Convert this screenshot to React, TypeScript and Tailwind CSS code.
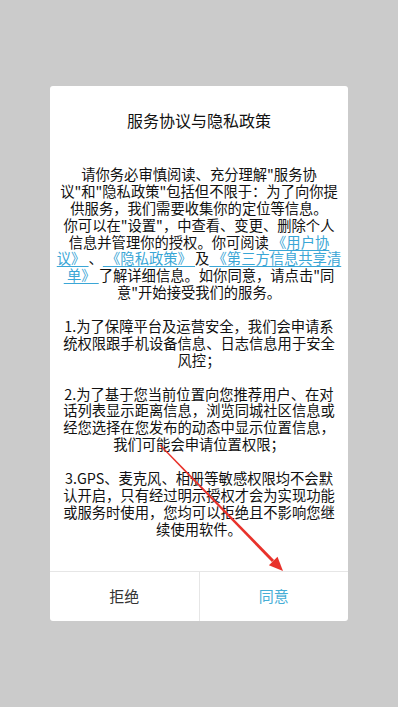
const font = { fontFamily: '"Noto Sans CJK SC", "Noto Sans", sans-serif' }

function L({ children }: { children: React.ReactNode }) {
  return <span className="text-[#3aa6d6] underline underline-offset-2 whitespace-pre">{children}</span>
}

const intro = [
  <>请你务必审慎阅读、充分理解"服务协</>,
  <>议"和"隐私政策"包括但不限于：为了向你提</>,
  <>供服务，我们需要收集你的定位等信息。</>,
  <>你可以在"设置"，中查看、变更、删除个人</>,
  <>信息并管理你的授权。你可阅读<L> 《用户协</L></>,
  <><L>议》 </L>、<L> 《隐私政策》 </L>及<L> 《第三方信息共享清</L></>,
  <><L> 单》 </L>了解详细信息。如你同意，请点击"同</>,
  <>意"开始接受我们的服务。</>,
]

const items = [
  ['1.为了保障平台及运营安全，我们会申请系', '统权限跟手机设备信息、日志信息用于安全', '风控；'],
  ['2.为了基于您当前位置向您推荐用户、在对', '话列表显示距离信息，浏览同城社区信息或', '经您选择在您发布的动态中显示位置信息，', '我们可能会申请位置权限；'],
  ['3.GPS、麦克风、相册等敏感权限均不会默', '认开启，只有经过明示授权才会为实现功能', '或服务时使用，您均可以拒绝且不影响您继', '续使用软件。'],
]

export default function App() {
  return (
    <div className="relative w-[398px] h-[707px] bg-[#cbcbcb] pt-[86px] px-[50px]" style={font}>
      <div className="bg-white rounded-[3px] overflow-hidden">
        <h1 className="text-center text-[16px] leading-[20px] text-[#111] pt-[24px]">服务协议与隐私政策</h1>
        <div className="pt-[35px] pb-[34px] text-center text-[14.3px] leading-[17px] text-[#111]">
          {intro.map((line, i) => (
            <div key={i} className="whitespace-nowrap h-[16.9px]">{line}</div>
          ))}
          {items.map((p, i) => (
            <div key={i} className="mt-[16.9px]">
              {p.map((line, j) => (
                <div key={j} className="whitespace-nowrap h-[16.9px]">{line}</div>
              ))}
            </div>
          ))}
        </div>
        <div className="flex border-t border-[#e6e6e6] h-[50px] text-[15px]">
          <button className="flex-1 text-[#333]">拒绝</button>
          <div className="w-px bg-[#e6e6e6]" />
          <button className="flex-1 text-[#46aed6]">同意</button>
        </div>
      </div>

      <svg className="absolute left-0 top-0 pointer-events-none" width="398" height="707">
        <polygon points="159.6,445.4 160.4,444.6 274.1,559.9 271.9,562.1" fill="#e8322b" />
        <polygon points="283,571 268.9,565.2 277.5,556.8" fill="#e8322b" />
      </svg>
    </div>
  )
}
